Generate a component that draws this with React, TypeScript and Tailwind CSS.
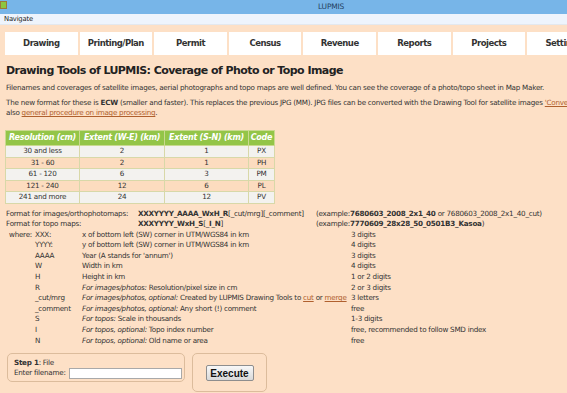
import React from "react";

const tabs = ["Drawing", "Printing/Plan", "Permit", "Census", "Revenue", "Reports", "Projects", "Settings"];

const rows = [
  ["30 and less", "2", "1", "PX"],
  ["31 - 60", "2", "1", "PH"],
  ["61 - 120", "6", "3", "PM"],
  ["121 - 240", "12", "6", "PL"],
  ["241 and more", "24", "12", "PV"],
];

const Link = ({ children }: { children: React.ReactNode }) => (
  <span className="text-[#b0602e] underline">{children}</span>
);

export default function App() {
  const where: [string, string, React.ReactNode, string][] = [
    ["where:", "XXX:", "x of bottom left (SW) corner in UTM/WGS84 in km", "3 digits"],
    ["", "YYYY:", "y of bottom left (SW) corner in UTM/WGS84 in km", "4 digits"],
    ["", "AAAA", "Year (A stands for 'annum')", "3 digits"],
    ["", "W", "Width in km", "4 digits"],
    ["", "H", "Height in km", "1 or 2 digits"],
    ["", "R", <><i>For images/photos:</i> Resolution/pixel size in cm</>, "2 or 3 digits"],
    ["", "_cut/mrg", <><i>For images/photos, optional:</i> Created by LUPMIS Drawing Tools to <Link>cut</Link> or <Link>merge</Link></>, "3 letters"],
    ["", "_comment", <><i>For images/photos, optional:</i> Any short (!) comment</>, "free"],
    ["", "S", <><i>For topos:</i> Scale in thousands</>, "1-3 digits"],
    ["", "I", <><i>For topos, optional:</i> Topo index number</>, "free, recommended to follow SMD index"],
    ["", "N", <><i>For topos, optional:</i> Old name or area</>, "free"],
  ];

  return (
    <div className="w-[567px] h-[393px] overflow-hidden bg-[#fde0c6] text-[#333] font-['DejaVu_Sans','Liberation_Sans',sans-serif]">
      <div className="w-[700px]">
        {/* title bar */}
        <div className="h-[14px] bg-[#77b5e8] flex items-start">
          <div className="mt-[1px] w-[7px] h-[8px] bg-[#8dc63f] border border-[#9a7a3a]" />
          <span className="ml-[311px] mt-[2px] text-[7.5px] leading-[9px] tracking-[-0.2px] text-[#23405e]">LUPMIS</span>
        </div>
        {/* menu bar */}
        <div className="h-[11px] bg-[#eef4fc] border-b border-[#e3e8ee] flex items-center pl-[4px]">
          <span className="text-[6.8px] leading-[8px] tracking-[-0.2px] text-[#222]">Navigate</span>
        </div>
        {/* tabs */}
        <div className="flex gap-[2px] pl-[5px] mt-[7px]">
          {tabs.map((t) => (
            <div key={t} className="w-[72.6px] h-[23px] shrink-0 bg-white flex items-center justify-center text-[8.5px] tracking-[-0.5px] font-bold text-[#333]">
              {t}
            </div>
          ))}
        </div>

        <div className="pl-[6px] text-[7.2px] tracking-[-0.25px]">
          <h1 className="mt-[9px] text-[11px] leading-[14px] tracking-[-0.56px] font-bold text-[#222]">
            Drawing Tools of LUPMIS: Coverage of Photo or Topo Image
          </h1>
          <p className="mt-[5px] leading-[10px] whitespace-nowrap">
            Filenames and coverages of satellite images, aerial photographs and topo maps are well defined. You can see the coverage of a photo/topo sheet in Map Maker.
          </p>
          <p className="mt-[5px] leading-[10px] whitespace-nowrap">
            The new format for these is <b>ECW</b> (smaller and faster). This replaces the previous JPG (MM). JPG files can be converted with the Drawing Tool for satellite images <Link>'Convert JPG to ECW'</Link>. See
            <br />
            also <Link>general procedure on image processing</Link>.
          </p>

          <table className="mt-[12px] -ml-[1px] border-collapse text-[#333]">
            <thead>
              <tr className="bg-[#93c548] h-[15px]">
                <th className="w-[74px] border border-[#c9d98f] text-white italic font-bold text-[8px] tracking-[-0.25px] px-0">Resolution (cm)</th>
                <th className="w-[85px] border border-[#c9d98f] text-white italic font-bold text-[8px] tracking-[-0.25px] px-0">Extent (W-E) (km)</th>
                <th className="w-[84px] border border-[#c9d98f] text-white italic font-bold text-[8px] tracking-[-0.25px] px-0">Extent (S-N) (km)</th>
                <th className="w-[26px] border border-[#c9d98f] text-white italic font-bold text-[8px] tracking-[-0.25px] px-0">Code</th>
              </tr>
            </thead>
            <tbody>
              {rows.map((r, i) => (
                <tr key={i} className={`h-[11.5px] ${i % 2 === 0 ? "bg-[#f3f2ef]" : "bg-[#fcdcbf]"}`}>
                  {r.map((c, j) => (
                    <td key={j} className="border border-[#d8d8a8] text-center leading-[10px] p-0">
                      {c}
                    </td>
                  ))}
                </tr>
              ))}
            </tbody>
          </table>

          <div className="mt-[5px] grid grid-cols-[132px_178px_auto] leading-[10.6px] whitespace-nowrap">
            <div>Format for images/orthophotomaps:</div>
            <div><b>XXXYYYY_AAAA_WxH_R</b>[_cut/mrg][_comment]</div>
            <div>(example:<b>7680603_2008_2x1_40</b> or 7680603_2008_2x1_40_cut)</div>
            <div>Format for topo maps:</div>
            <div><b>XXXYYYY_WxH_S</b>[_<b>I</b>_<b>N</b>]</div>
            <div>(example:<b>7770609_28x28_50_0501B3_Kasoa</b>)</div>
          </div>

          <div className="grid grid-cols-[29px_47px_269px_auto] leading-[10.6px] whitespace-nowrap">
            {where.map((w, i) => (
              <React.Fragment key={i}>
                <div className="text-right pr-[3px]">{w[0]}</div>
                <div>{w[1]}</div>
                <div>{w[2]}</div>
                <div>{w[3]}</div>
              </React.Fragment>
            ))}
          </div>

          <div className="flex gap-[7px] mt-[7px] ml-[1px]">
            <div className="w-[178px] h-[29px] border border-[#dcbc9c] rounded-[5px] pl-[6px] pt-[4px] leading-[9.5px] whitespace-nowrap">
              <div><b>Step 1</b>: File</div>
              <div className="flex items-center">
                <span>Enter filename:</span>
                <div className="ml-[3px] w-[113px] h-[11px] bg-white border border-[#a9a9a9]" />
              </div>
            </div>
            <div className="w-[75px] h-[39px] border border-[#dcbc9c] rounded-[5px] flex justify-center pt-[11px]">
              <div className="w-[48px] h-[16px] border border-[#8e8e8e] rounded-[2px] bg-gradient-to-b from-[#f8f8f8] to-[#d9d9d9] flex items-center justify-center text-[10px] tracking-normal font-bold text-[#111] font-['Liberation_Sans',Arial,sans-serif]">
                Execute
              </div>
            </div>
          </div>
        </div>
      </div>
    </div>
  );
}
